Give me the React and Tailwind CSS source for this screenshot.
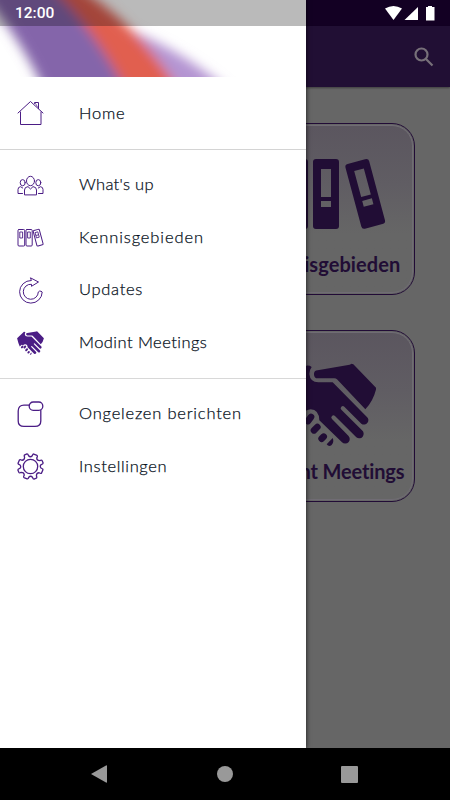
import React from 'react';

const line = { fill: 'none', stroke: '#4b1d85', strokeWidth: 1, strokeLinejoin: 'round', strokeLinecap: 'round' };

function HomeIcon() {
  return (
    <svg className="h-[27px] w-[27px]" viewBox="0 0 27 27" {...line}>
      <path d="M1 13 13.5 1.5 26 13M3.5 12V24.5H24V12M17.5 3.500V2.500H21.5V8.5" />
      <path d="M18.500 3.500 20.500 7" strokeWidth=".7" />
    </svg>
  );
}

function PeopleIcon() {
  return (
    <svg className="h-[27px] w-[27px]" viewBox="0 0 27 27" {...line}>
      <ellipse cx="13.5" cy="9" rx="4" ry="4.7" />
      <ellipse cx="5.7" cy="10.7" rx="2.5" ry="3.1" />
      <ellipse cx="21.3" cy="10.7" rx="2.5" ry="3.1" />
      <path d="M7.5 22.5V18Q7.5 15 11 14.6L13.5 17 16 14.6Q19.5 15 19.5 18V22.5ZM5.5 21.5H1V17.5Q1 15 3.5 14.7L5.7 16M21.5 21.5H26V17.5Q26 15 23.5 14.7L21.3 16" />
    </svg>
  );
}

function BindersLineIcon() {
  return (
    <svg className="h-[27px] w-[27px]" viewBox="0 0 27 27" {...line}>
      <rect x="1" y="5.5" width="6.7" height="16.5" rx="1" />
      <rect x="9" y="5.5" width="6.2" height="16.5" rx="1" />
      <path d="M3.2 8H5.6V14H3.2ZM11 8H13.3V14H11Z" strokeWidth=".9" />
      <g transform="rotate(-15 21 13.5)">
        <rect x="17.9" y="5.7" width="6.4" height="16" rx="1" />
        <path d="M19.8 8H22.3V13.5H19.8ZM20 11H22" strokeWidth=".8" />
      </g>
    </svg>
  );
}

function UpdateIcon() {
  return (
    <svg className="h-[27px] w-[27px]" viewBox="0 0 27 27" {...line}>
      <path d="M13.8 1 21.5 5 14.5 9.3V7.3A7.5 7.5 0 1 0 21.3 15Q22 13.7 24 14.2L25.2 15A11.3 11.3 0 1 1 14 3.5Z" />
    </svg>
  );
}

function UnreadIcon() {
  return (
    <svg className="h-[27px] w-[27px]" viewBox="0 0 27 27" {...line} strokeWidth="1.3">
      <path d="M12.3 4.2H7Q1.2 4.2 1.2 10V20Q1.2 25.4 7 25.4H18Q23.8 25.4 23.8 20V9.3" />
      <rect x="12.2" y="1" width="13.6" height="8.3" rx="4" />
    </svg>
  );
}

function GearIcon() {
  return (
    <svg className="h-[27px] w-[27px]" viewBox="0 0 27 27" {...line} strokeWidth="1.3">
      <circle cx="13.5" cy="13.5" r="7.2" />
      <path transform="rotate(22.5 13.5 13.5)" d="M11.7.8H15.3Q16.300 1 16 3.200 17 5.600 19.800 4.500 21.300 3 22.100 3.700L23.800 5.400Q24.300 6.200 22.700 7.600 21.500 10 24.100 11 26.200 10.800 26.200 11.900V15.300Q26 16.300 23.800 16 21.400 17 22.500 19.800 24 21.300 23.300 22.100L21.600 23.800Q20.800 24.300 19.400 22.700 17 21.500 16 24.100 16.200 26.200 15.100 26.200H11.700Q10.700 26 11 23.800 10 21.400 7.200 22.500 5.700 24 4.900 23.300L3.200 21.600Q2.700 20.800 4.300 19.400 5.500 17 2.900 16 .8 16.200.8 15.100V11.700Q1 10.700 3.200 11 5.600 10 4.500 7.200 3 5.700 3.700 4.900L5.400 3.200Q6.200 2.700 7.600 4.300 10 5.500 11 2.900 10.800.8 11.700.8Z" />
    </svg>
  );
}

function Handshake({ className }) {
  return (
    <svg className={className} viewBox="-43 123 284 252" fill="currentColor">
      <path d="M64 145 160 128 166 125 171 127 240 198Q232 235 207 262L122 172Q119 169 114 169H66A12 12 0 0 1 64 145Z" />
      <path d="M-42 198 30 131Q40 130 46 135 39 144 39 156 41 180 66 181H109L211 284A13 13 0 0 1 195 305L144 254A6 6 0 0 0 135 263L197 325A13 13 0 0 1 180 346L116 282A6 6 0 0 0 107 291L156 341A13 13 0 0 1 137 361L69 295Q68 263 43 262 28 263 21 275 9 260-3 274L-14 287Q-30 250-42 198Z" />
      <g fill="none" stroke="currentColor" strokeWidth="20" strokeLinecap="round">
        <path d="M8 295 15 287M35 297 44 285M53 325 63 315M76 350 82 344" />
      </g>
      <path d="M91 367 109 348Q114 361 106 369 98 376 91 367Z" />
    </svg>
  );
}

function BindersIcon() {
  return (
    <svg className="h-[70px] w-[106px] overflow-visible" viewBox="0 0 106 70" fill="currentColor" fillRule="evenodd">
      <path d="M9 0H29Q32 0 32 3V67Q32 70 29 70H9Q6 70 6 67V3Q6 0 9 0ZM14 10V38H24V10ZM14 42V48H24V42Z" />
      <path d="M40 0H60Q63 0 63 3V67Q63 70 60 70H40Q37 70 37 67V3Q37 0 40 0ZM45 10V38H55V10ZM45 42V48H55V42Z" />
      <path
        transform="rotate(-15 89 35)"
        d="M80 1.5H98Q101.500 1.500 101.500 4.500V65.500Q101.500 68.500 98 68.500H80Q77 68.500 77 65.500V4.500Q77 1.500 80 1.500ZM84.500 10V37H94.500V10ZM84.500 41V47H94.500V41Z"
      />
    </svg>
  );
}

function Card({ label, labelClass, children }) {
  return (
    <div className="h-[172px] w-[172px] rounded-[23px] border border-[#210b36] p-px text-[#210d35]">
      <div className="flex h-full w-full flex-col items-center rounded-[21px] border border-[#706c74] bg-linear-to-b from-[#5b565f] via-[#605d63] via-35% to-[#666] to-65%">
        {children}
        <div className={labelClass}>{label}</div>
      </div>
    </div>
  );
}

function Row({ icon, label, tracking }) {
  return (
    <div className="flex h-[52.5px] items-center pl-[17px]">
      {icon}
      <span className={`ml-[35px] -mt-[2px] whitespace-nowrap text-[16.5px] font-light leading-6 text-[#07111c] [-webkit-text-stroke:0.25px_#07111c] ${tracking}`}>{label}</span>
    </div>
  );
}

function Drawer() {
  return (
    <aside className="absolute left-0 top-0 h-[748px] w-[306px] bg-white shadow-[1px_0_4px_rgba(0,0,0,0.55)]">
      <svg className="block h-[77px] w-full" viewBox="0 0 306 77">
        <defs>
          <filter id="soft" x="-20%" y="-30%" width="140%" height="160%"><feGaussianBlur stdDeviation="6" /></filter>
        </defs>
        <g filter="url(#soft)">
          <path d="M100 20Q175 42 233 94H130Z" fill="#b494d2" />
          <path d="M46-30Q130 8 185 100H100L30-30Z" fill="#e15f50" />
          <path d="M-38-30H31Q88 15 131 100H48Q22 35-38-30Z" fill="#8465aa" />
        </g>
        <rect width="307" height="26" fill="#000" fillOpacity=".27" />
      </svg>
      <nav className="pt-[10.500px]">
        <Row icon={<HomeIcon />} label="Home" tracking="tracking-[0.8px]" />
        <hr className="my-[9px] border-[#d4d4d4]" />
        <Row icon={<PeopleIcon />} label="What's up" tracking="tracking-[0.3px]" />
        <Row icon={<BindersLineIcon />} label="Kennisgebieden" tracking="tracking-[0.9px]" />
        <Row icon={<UpdateIcon />} label="Updates" tracking="tracking-[0.7px]" />
        <Row icon={<Handshake className="h-6 w-[27px] text-[#4b1d85]" />} label="Modint Meetings" tracking="tracking-[0.45px]" />
        <hr className="my-[9px] border-[#d8d8d8]" />
        <Row icon={<UnreadIcon />} label="Ongelezen berichten" tracking="tracking-[0.8px]" />
        <Row icon={<GearIcon />} label="Instellingen" tracking="tracking-[0.65px]" />
      </nav>
    </aside>
  );
}

function StatusBar() {
  return (
    <div className="absolute inset-x-0 top-0 flex h-[26px] items-center justify-between pl-[15px] pr-[15px] text-white">
      <span className="mt-[2px] font-['Roboto',sans-serif] text-[15.500px] font-medium leading-none">12:00</span>
      <svg className="h-4 w-[50px]" viewBox="0 0 50 16" fill="currentColor">
        <path d="M0 3.500Q8.500-1.500 17 3.500L8.500 15Z" />
        <path d="M33 2V15H19.500Z" />
        <path d="M41 2H43V1H47V2H49.500V15.500H41Z" />
      </svg>
    </div>
  );
}

export default function App() {
  return (
    <div className="relative flex h-[800px] w-[450px] flex-col overflow-hidden bg-[#666] font-['Lato',sans-serif]">
      <div className="h-[26px] bg-[#130023]" />
      <header className="flex h-[61px] items-center justify-end bg-[#210f34] pr-4 text-[#777079] shadow-[0_1px_2px_rgba(0,0,0,0.4)]">
        <svg className="h-5 w-5" viewBox="0 0 20 20" fill="none" stroke="currentColor" strokeWidth="2.200">
          <circle cx="7.500" cy="7.500" r="6" />
          <path d="M12 12 18.500 18.500" />
        </svg>
      </header>
      <main className="flex flex-1 flex-col items-end gap-[35px] pr-[35px] pt-9">
        <Card label="Kennisgebieden" labelClass="mt-[20px] whitespace-nowrap text-[20px] font-bold leading-[30px] tracking-[0.1px]">
          <div className="mt-[33px]"><BindersIcon /></div>
        </Card>
        <Card label="Modint Meetings" labelClass="mt-[9px] whitespace-nowrap text-[20px] font-bold leading-[30px] tracking-[-0.15px]">
          <div className="mt-[30px]"><Handshake className="h-[84px] w-[94.667px]" /></div>
        </Card>
      </main>
      <footer className="flex h-[52px] items-center bg-black text-[#999]">
        <svg className="ml-[91px] h-[18px] w-4" viewBox="0 0 16 18" fill="currentColor"><path d="M0 9 15 .4Q16 0 16 1V17Q16 18 15 17.600Z" /></svg>
        <div className="ml-[110px] h-4 w-4 rounded-full bg-current" />
        <div className="ml-[108px] h-[17px] w-[17px] rounded-[1px] bg-current" />
      </footer>
      <Drawer />
      <StatusBar />
    </div>
  );
}
